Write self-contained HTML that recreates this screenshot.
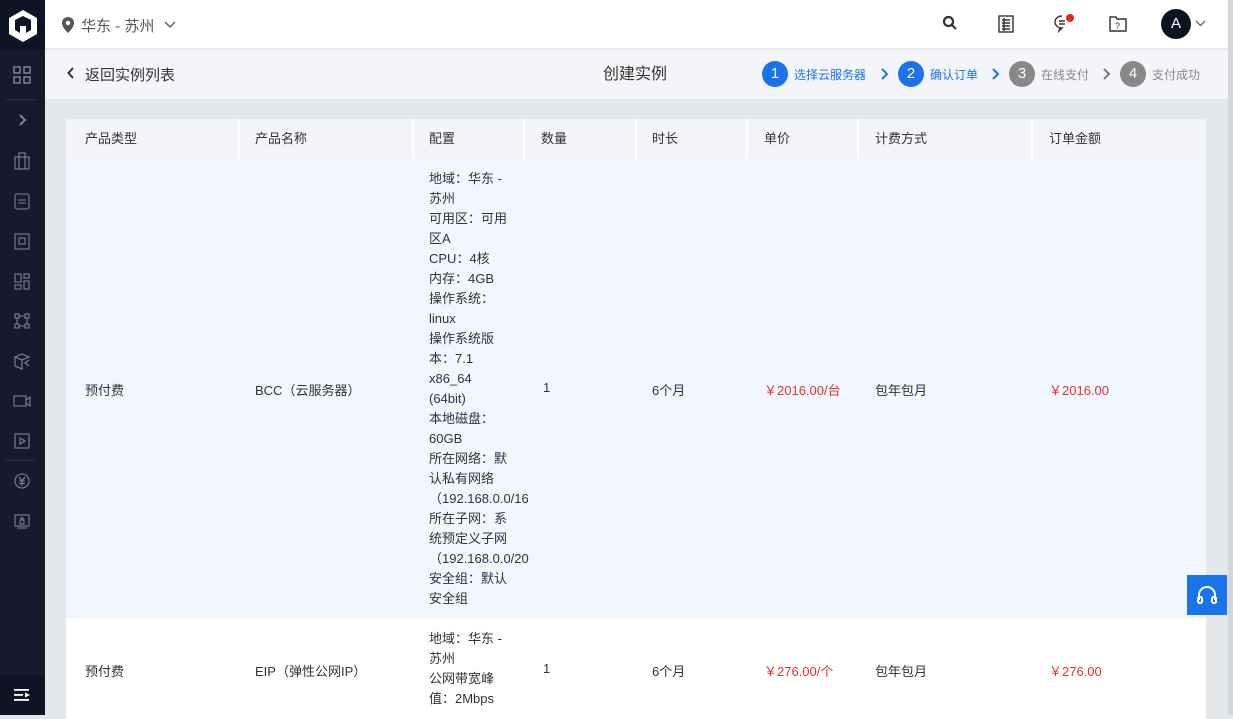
<!DOCTYPE html><html><head><meta charset="utf-8"><style>
*{margin:0;padding:0;box-sizing:border-box}
body{width:1233px;height:715px;overflow:hidden;background:#e5e8eb;font-family:"Liberation Sans","Noto Sans CJK SC",sans-serif;font-size:13px;color:#333;position:relative}
.side{position:absolute;left:0;top:0;width:45px;height:715px;background:#141b2d}
.logo{height:49px;background:#0f1424;display:flex;align-items:center;justify-content:center}
.si{position:absolute;left:12px;width:20px;height:20px}
.top{position:absolute;left:45px;top:0;right:0;height:49px;background:#fff;border-bottom:1px solid #e8e8e8}
.sub{position:absolute;left:45px;top:50px;right:5px;height:49px;background:#f4f5f8}
.tbl{position:absolute;left:66px;top:119px;width:1140px}
.hd{height:40px;background:#f4f5f9;position:relative}
.c{position:absolute;padding-left:19px}
.hd .c{top:0;line-height:40px;color:#333}
.sep{position:absolute;top:0;width:2px;height:40px;background:#fff}
.r1{height:460px;background:#f0f7fe;position:relative}
.r2{height:100px;background:#fff;position:relative}
.red{color:#e8312e}
.cfg{line-height:20px}
.step{position:absolute;top:61px;display:flex;align-items:center;font-size:12px}
.n{width:26px;height:26px;border-radius:50%;color:#fff;font-size:15px;text-align:center;line-height:26px;margin-right:6px}
</style></head><body>
<div class="side">
 <div class="logo"><svg width="32" height="34" viewBox="0 0 32 34"><path d="M16 2 L30 10 L30 26 L16 34 L2 26 L2 10 Z" fill="#fff"/><path d="M8 12 L16 8 L24 12 L24 22 L19 25 L19 18 L13 18 L13 25 L8 22 Z" fill="#0f1424"/></svg></div>
 <svg class="si" style="top:65px" viewBox="0 0 20 20" fill="none" stroke="#8a93a8" stroke-width="1.3"><rect x="2" y="2" width="6" height="6"/><rect x="12" y="2" width="6" height="6"/><rect x="2" y="12" width="6" height="6"/><rect x="12" y="12" width="6" height="6"/></svg>
 <div style="position:absolute;left:6px;top:99px;width:30px;height:1px;background:#2b3347"></div>
 <svg class="si" style="top:110px" viewBox="0 0 20 20" fill="none" stroke="#8a93a8" stroke-width="1.6"><path d="M8 5l5 5-5 5"/></svg>
 <svg class="si" style="top:151px" viewBox="0 0 20 20" fill="none" stroke="#7a8399" stroke-width="1.1"><rect x="3" y="6" width="14" height="12"/><rect x="7" y="2" width="6" height="16"/></svg>
 <svg class="si" style="top:191px" viewBox="0 0 20 20" fill="none" stroke="#7a8399" stroke-width="1.1"><rect x="3" y="3" width="14" height="15" rx="2"/><path d="M6 9h8M6 12h8"/></svg>
 <svg class="si" style="top:231px" viewBox="0 0 20 20" fill="none" stroke="#7a8399" stroke-width="1.1"><rect x="3" y="3" width="14" height="15"/><rect x="7" y="7" width="6" height="6"/></svg>
 <svg class="si" style="top:271px" viewBox="0 0 20 20" fill="none" stroke="#7a8399" stroke-width="1.1"><rect x="3" y="3" width="6" height="8"/><rect x="12" y="3" width="5" height="4"/><rect x="3" y="14" width="6" height="4"/><rect x="12" y="10" width="5" height="8"/></svg>
 <svg class="si" style="top:311px" viewBox="0 0 20 20" fill="none" stroke="#7a8399" stroke-width="1.1"><rect x="3" y="3" width="4" height="4"/><rect x="13" y="3" width="4" height="4"/><rect x="3" y="13" width="4" height="4"/><rect x="13" y="13" width="4" height="4"/><path d="M7 5h6M7 15h6M5 7v6M15 7v6"/></svg>
 <svg class="si" style="top:351px" viewBox="0 0 20 20" fill="none" stroke="#7a8399" stroke-width="1.1"><path d="M3 6l7-3 7 3-7 3zM3 6v9l7 3V9M17 9l-4 3 4 3"/></svg>
 <svg class="si" style="top:391px" viewBox="0 0 20 20" fill="none" stroke="#7a8399" stroke-width="1.1"><rect x="2" y="5" width="12" height="10"/><path d="M14 9l4-3v9l-4-3"/></svg>
 <svg class="si" style="top:431px" viewBox="0 0 20 20" fill="none" stroke="#7a8399" stroke-width="1.1"><rect x="3" y="3" width="14" height="14"/><path d="M8 7l5 3-5 3z"/></svg>
 <div style="position:absolute;left:5px;top:460px;width:30px;height:1px;background:#2b3347"></div>
 <svg class="si" style="top:471px" viewBox="0 0 20 20" fill="none" stroke="#7a8399" stroke-width="1.1"><circle cx="10" cy="10" r="7"/><path d="M7 6l3 4 3-4M10 10v5M7 10h6M7 12.5h6"/></svg>
 <svg class="si" style="top:511px" viewBox="0 0 20 20" fill="none" stroke="#7a8399" stroke-width="1.1"><rect x="3" y="4" width="14" height="11"/><path d="M5 17h10"/><rect x="8" y="9" width="4" height="4"/><path d="M9 9V7.5a1 1 0 0 1 2 0V9"/></svg>
 <div style="position:absolute;left:0;top:675px;width:45px;height:40px;background:#0f1424"></div>
 <svg class="si" style="top:685px" viewBox="0 0 20 20" fill="#fff"><rect x="2" y="4" width="15" height="1.8"/><rect x="2" y="9" width="9" height="1.8"/><rect x="2" y="14" width="15" height="1.8"/><path d="M13 7.5l5 2.5-5 2.5z"/></svg>
</div>
<div class="top">
 <svg style="position:absolute;left:16px;top:16px" width="14" height="18" viewBox="0 0 14 18"><path d="M7 1a6 6 0 0 0-6 6c0 4.5 6 10 6 10s6-5.5 6-10a6 6 0 0 0-6-6z" fill="#555"/><circle cx="7" cy="7" r="2.2" fill="#fff"/></svg>
 <span style="position:absolute;left:36px;top:15px;font-size:15px;color:#555">华东 - 苏州</span>
 <svg style="position:absolute;left:119px;top:21px" width="12" height="8" viewBox="0 0 12 8" fill="none" stroke="#666" stroke-width="1.5"><path d="M1 1l5 5 5-5"/></svg>
 <svg style="position:absolute;left:897px;top:15px" width="16" height="16" viewBox="0 0 16 16" fill="none" stroke="#333" stroke-width="2.2"><circle cx="6.5" cy="6.5" r="4.5"/><path d="M10 10l4 4"/></svg>
 <svg style="position:absolute;left:953px;top:15px" width="16" height="18" viewBox="0 0 16 18" fill="none" stroke="#333" stroke-width="1.4"><rect x="1" y="1" width="14" height="16"/><path d="M4 5h8M4 8h8M4 11h8M4 14h8M6 3v13"/></svg>
 <svg style="position:absolute;left:1008px;top:13px" width="22" height="20" viewBox="0 0 22 20" fill="none" stroke="#333" stroke-width="1.4"><path d="M9 3a7 6 0 1 0 0 12l-3 3 1-3.5"/><path d="M6 8h6M6 11h6"/><circle cx="17" cy="5" r="4" fill="#e82525" stroke="none"/></svg>
 <svg style="position:absolute;left:1064px;top:14px" width="18" height="18" viewBox="0 0 18 18" fill="none" stroke="#333" stroke-width="1.4"><path d="M1 3h6l1 2h9v12H1z"/><text x="6" y="15" font-size="9" fill="#333" stroke="none" font-family="Liberation Sans">?</text></svg>
 <div style="position:absolute;left:1116px;top:9px;width:30px;height:30px;border-radius:50%;background:#0d1220;color:#fff;text-align:center;line-height:30px;font-size:15px">A</div>
 <svg style="position:absolute;left:1150px;top:20px" width="11" height="8" viewBox="0 0 11 8" fill="none" stroke="#666" stroke-width="1.4"><path d="M1 1l4.5 4.5L10 1"/></svg>
</div>
<div class="sub">
 <svg style="position:absolute;left:22px;top:17px" width="8" height="12" viewBox="0 0 8 12" fill="none" stroke="#333" stroke-width="2"><path d="M6 1L1.5 6 6 11"/></svg>
 <span style="position:absolute;left:40px;top:14px;font-size:15px;color:#333">返回实例列表</span>
 <span style="position:absolute;left:558px;top:10px;font-size:16px;color:#333">创建实例</span>
</div>
<div class="step" style="left:762px"><div class="n" style="background:#1a73e8">1</div><span style="color:#1a73e8">选择云服务器</span></div>
<svg style="position:absolute;left:880px;top:68px" width="9" height="12" viewBox="0 0 9 12" fill="none" stroke="#1a73e8" stroke-width="2"><path d="M2 1l5 5-5 5"/></svg>
<div class="step" style="left:898px"><div class="n" style="background:#1a73e8">2</div><span style="color:#1a73e8">确认订单</span></div>
<svg style="position:absolute;left:991px;top:68px" width="9" height="12" viewBox="0 0 9 12" fill="none" stroke="#1a73e8" stroke-width="2"><path d="M2 1l5 5-5 5"/></svg>
<div class="step" style="left:1009px"><div class="n" style="background:#888">3</div><span style="color:#888">在线支付</span></div>
<svg style="position:absolute;left:1102px;top:68px" width="9" height="12" viewBox="0 0 9 12" fill="none" stroke="#777" stroke-width="2"><path d="M2 1l5 5-5 5"/></svg>
<div class="step" style="left:1120px"><div class="n" style="background:#888">4</div><span style="color:#888">支付成功</span></div>
<div class="tbl">
 <div class="hd">
  <div class="c" style="left:0">产品类型</div><div class="sep" style="left:172px"></div>
  <div class="c" style="left:170px">产品名称</div><div class="sep" style="left:346px"></div>
  <div class="c" style="left:344px">配置</div><div class="sep" style="left:457px"></div>
  <div class="c" style="left:456px">数量</div><div class="sep" style="left:569px"></div>
  <div class="c" style="left:567px">时长</div><div class="sep" style="left:680px"></div>
  <div class="c" style="left:679px">单价</div><div class="sep" style="left:791px"></div>
  <div class="c" style="left:790px">计费方式</div><div class="sep" style="left:965px"></div>
  <div class="c" style="left:964px">订单金额</div>
 </div>
 <div class="r1">
  <div class="c" style="left:0;top:221px">预付费</div>
  <div class="c" style="left:170px;top:221px">BCC（云服务器）</div>
  <div class="c cfg" style="left:344px;top:10px;white-space:nowrap">地域：华东 -<br>苏州<br>可用区：可用<br>区A<br>CPU：4核<br>内存：4GB<br>操作系统：<br>linux<br>操作系统版<br>本：7.1<br>x86_64<br>(64bit)<br>本地磁盘：<br>60GB<br>所在网络：默<br>认私有网络<br>（192.168.0.0/16<br>所在子网：系<br>统预定义子网<br>（192.168.0.0/20<br>安全组：默认<br>安全组</div>
  <div class="c" style="left:458px;top:221px">1</div>
  <div class="c" style="left:567px;top:221px">6个月</div>
  <div class="c red" style="left:679px;top:221px">￥2016.00/台</div>
  <div class="c" style="left:790px;top:221px">包年包月</div>
  <div class="c red" style="left:964px;top:221px">￥2016.00</div>
 </div>
 <div class="r2">
  <div class="c" style="left:0;top:42px">预付费</div>
  <div class="c" style="left:170px;top:42px">EIP（弹性公网IP）</div>
  <div class="c cfg" style="left:344px;top:10px">地域：华东 -<br>苏州<br>公网带宽峰<br>值：2Mbps</div>
  <div class="c" style="left:458px;top:42px">1</div>
  <div class="c" style="left:567px;top:42px">6个月</div>
  <div class="c red" style="left:679px;top:42px">￥276.00/个</div>
  <div class="c" style="left:790px;top:42px">包年包月</div>
  <div class="c red" style="left:964px;top:42px">￥276.00</div>
 </div>
</div>
<div style="position:absolute;left:1187px;top:575px;width:40px;height:40px;background:#1a73e8"></div>
<svg style="position:absolute;left:1195px;top:583px" width="24" height="24" viewBox="0 0 24 24" fill="none" stroke="#fff" stroke-width="2"><path d="M4 17v-5a8 8 0 0 1 16 0v5"/><rect x="3" y="14" width="4" height="6" rx="1.5"/><rect x="17" y="14" width="4" height="6" rx="1.5"/></svg>
<div style="position:absolute;left:1228px;top:0;width:5px;height:715px;background:#d4d6da"></div>
</body></html>
